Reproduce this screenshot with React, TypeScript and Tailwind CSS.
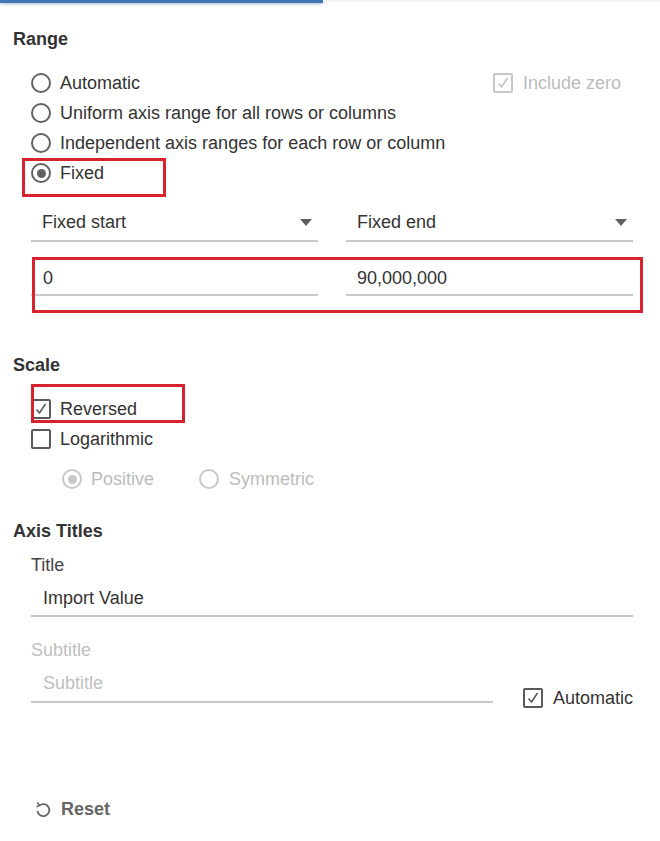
import React from "react";

function Radio({ checked, disabled }: { checked?: boolean; disabled?: boolean }) {
  return (
    <span
      className={`flex h-[20px] w-[20px] shrink-0 items-center justify-center rounded-full border-2 ${
        disabled ? "border-[#c8c8c8]" : "border-[#626262]"
      }`}
    >
      {checked && (
        <span className={`h-[9px] w-[9px] rounded-full ${disabled ? "bg-[#c8c8c8]" : "bg-[#626262]"}`} />
      )}
    </span>
  );
}

function Checkbox({ checked, disabled }: { checked?: boolean; disabled?: boolean }) {
  const c = disabled ? "#c4c4c4" : "#5a5a5a";
  return (
    <span
      className={`flex h-[20px] w-[20px] shrink-0 items-center justify-center rounded-[2px] border-2 ${
        disabled ? "border-[#c8c8c8]" : "border-[#5a5a5a]"
      }`}
    >
      {checked && (
        <svg width="14" height="14" viewBox="0 0 14 14">
          <polyline points="2.5,7.5 5.5,11 11.5,2" fill="none" stroke={c} strokeWidth="1.6" />
        </svg>
      )}
    </span>
  );
}

function Caret() {
  return (
    <svg width="12" height="7" viewBox="0 0 12 7">
      <polygon points="0,0 12,0 6,7" fill="#5f5f5f" />
    </svg>
  );
}

export default function App() {
  return (
    <div className="h-[841px] w-[660px] overflow-hidden bg-white font-['Liberation_Sans',Arial,sans-serif] text-[18px] leading-[22px] text-[#333]">
      <div className="flex items-start">
        <div className="h-[3px] w-[323px] bg-[#3f78b5] shadow-[0_1px_3px_rgba(63,120,181,0.5)]" />
        <div className="h-[2px] flex-1 bg-[#f1f1f1]" />
      </div>

      <div className="pl-[13px]">
        <h3 className="mt-[25px] font-bold text-[#333]">Range</h3>
      </div>

      <div className="mt-[18px] pl-[31px] pr-[27px]">
        <div className="flex h-[30px] items-center">
          <Radio />
          <span className="ml-[9px]">Automatic</span>
          <div className="ml-auto mr-[12px] flex items-center">
            <Checkbox checked disabled />
            <span className="ml-[10px] text-[#bcbcbc]">Include zero</span>
          </div>
        </div>
        <div className="flex h-[30px] items-center">
          <Radio />
          <span className="ml-[9px]">Uniform axis range for all rows or columns</span>
        </div>
        <div className="flex h-[30px] items-center">
          <Radio />
          <span className="ml-[9px]">Independent axis ranges for each row or column</span>
        </div>
        <div className="relative flex h-[30px] items-center">
          <Radio checked />
          <span className="ml-[9px]">Fixed</span>
          <div className="absolute left-[-9px] top-0 h-[39px] w-[144px] border-[3px] border-[#d8232f]" />
        </div>

        <div className="mt-[12px] grid grid-cols-2 gap-[28px]">
          <div className="flex items-center justify-between border-b-2 border-[#c9c9c9] pb-[7px] pl-[11px] pr-[6px] pt-[11px]">
            <span>Fixed start</span>
            <Caret />
          </div>
          <div className="flex items-center justify-between border-b-2 border-[#c9c9c9] pb-[7px] pl-[11px] pr-[6px] pt-[11px]">
            <span>Fixed end</span>
            <Caret />
          </div>
        </div>

        <div className="relative mt-[15px] pb-[17px]">
          <div className="grid grid-cols-2 gap-[28px]">
            <div className="border-b-2 border-[#c9c9c9] pb-[5px] pl-[12px] pt-[10px]">0</div>
            <div className="border-b-2 border-[#c9c9c9] pb-[5px] pl-[11px] pt-[10px]">90,000,000</div>
          </div>
          <div className="absolute bottom-0 left-[1px] right-[-10px] top-0 border-[3px] border-[#d8232f]" />
        </div>
      </div>

      <div className="pl-[13px]">
        <h3 className="mt-[41px] font-bold">Scale</h3>
      </div>

      <div className="mt-[18px] pl-[31px]">
        <div className="relative flex h-[30px] items-center">
          <Checkbox checked />
          <span className="ml-[9px]">Reversed</span>
          <div className="absolute left-0 top-[-10px] h-[39px] w-[154px] border-[3px] border-[#d8232f]" />
        </div>
        <div className="flex h-[30px] items-center">
          <Checkbox />
          <span className="ml-[9px]">Logarithmic</span>
        </div>
        <div className="mt-[10px] flex h-[30px] items-center pl-[31px] text-[#bcbcbc]">
          <Radio checked disabled />
          <span className="ml-[9px]">Positive</span>
          <span className="ml-[45px]">
            <Radio disabled />
          </span>
          <span className="ml-[10px]">Symmetric</span>
        </div>
      </div>

      <div className="pl-[13px]">
        <h3 className="mt-[26px] font-bold">Axis Titles</h3>
      </div>

      <div className="pl-[31px] pr-[27px]">
        <div className="mt-[12px] text-[#444]">Title</div>
        <div className="mt-[11px] border-b-2 border-[#c9c9c9] pb-[6px] pl-[12px]">Import Value</div>
        <div className="mt-[22px] text-[#c0c0c0]">Subtitle</div>
        <div className="mt-[11px] flex items-start">
          <div className="w-[463px] border-b-2 border-[#c9c9c9] pb-[7px] pl-[12px] text-[#c0c0c0]">Subtitle</div>
          <div className="ml-[30px] mt-[15px] flex items-center">
            <Checkbox checked />
            <span className="ml-[10px]">Automatic</span>
          </div>
        </div>
      </div>

      <div className="mt-[89px] flex items-center pl-[35px] text-[#666]">
        <svg width="16" height="17" viewBox="0 0 16 17" fill="none" stroke="#666" strokeWidth="1.8">
          <path d="M4.6 4.4 A6 6 0 1 1 2.4 10" />
          <polyline points="2.2,1.4 4.6,4.4 1.4,5.8" strokeWidth="1.6" />
        </svg>
        <span className="ml-[10px] font-bold">Reset</span>
      </div>
    </div>
  );
}
